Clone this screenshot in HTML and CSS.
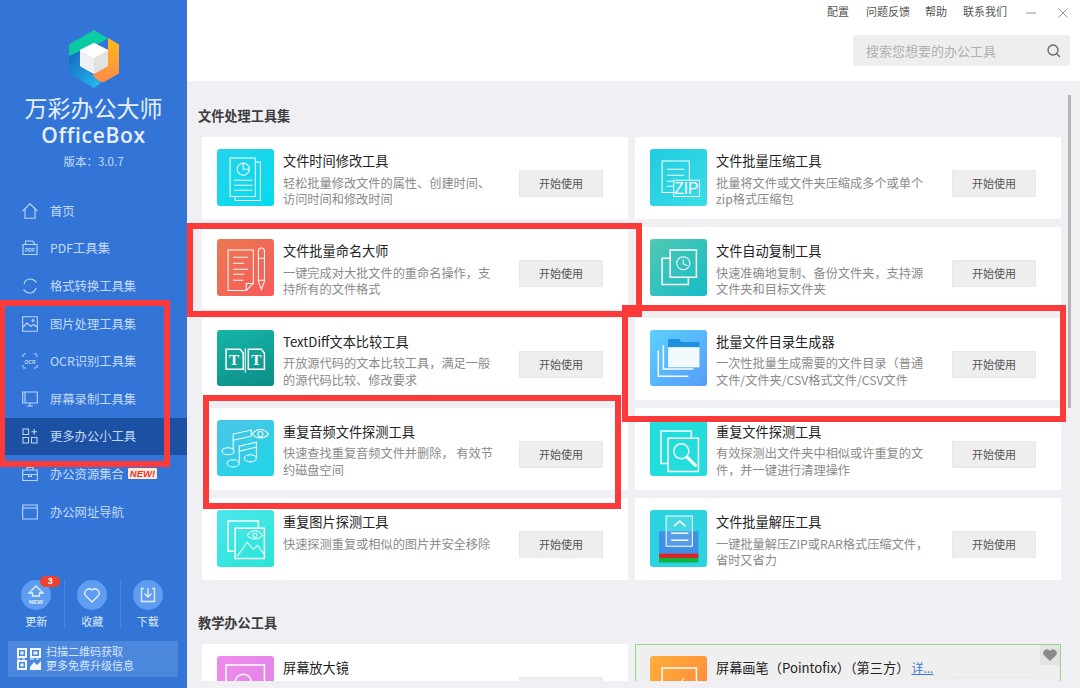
FILE: index.html
```html
<!DOCTYPE html>
<html lang="zh-CN">
<head>
<meta charset="utf-8">
<title>万彩办公大师 OfficeBox</title>
<link rel="stylesheet" href="styles.css">
</head>
<body>
<div class="app">
  <aside class="side">
    <div class="brand">
      <svg class="logo" viewBox="0 0 50 58">
        <defs>
          <linearGradient id="lgA" x1="0" y1="0" x2="1" y2="0"><stop offset="0" stop-color="#08c8a0"/><stop offset="1" stop-color="#0bd0a4"/></linearGradient>
          <linearGradient id="lgB" x1="0" y1="0" x2="0" y2="1"><stop offset="0" stop-color="#ffb914"/><stop offset="1" stop-color="#ff8a4a"/></linearGradient>
          <linearGradient id="lgC" x1="0" y1="0" x2="1" y2="1"><stop offset="0" stop-color="#1565c0"/><stop offset="1" stop-color="#25c0ee"/></linearGradient>
        </defs>
        <path d="M0 14.500 25 0l14 8.500L13 22.500 0 29z" fill="url(#lgA)"/>
        <path d="M39 8 50 14.500v29L34 52.500l-14-5L39 36z" fill="url(#lgB)"/>
        <path d="M0 26 13 20v16l19 17-7 5L0 43.500z" fill="url(#lgC)"/>
        <path d="M11 20 25 13l14 7v16l-14 8-14-8z" fill="#f4f4f4"/>
        <path d="M25 28v16l14-8V20z" fill="#e2e2e2"/>
        <path d="M11 20v16l14 8V28z" fill="#f0f0f0"/>
        <path d="M11 20 25 13l14 7-14 8z" fill="#fff"/>
      </svg>
      <div class="brand-cn">万彩办公大师</div>
      <div class="brand-en">OfficeBox</div>
      <div class="brand-ver">版本：3.0.7</div>
    </div>

    <nav class="menu">
      <a class="menu-item"><svg class="mi" viewBox="0 0 16 16"><path d="M.7 8 8 .8 15.300 8M3 6.500v8.700h10V6.500"/></svg><span>首页</span></a>
      <a class="menu-item"><svg class="mi" viewBox="0 0 16 16"><path d="M3.500 4V1h7l2 2v1M1 4.500h14v10H1z"/><text x="8" y="12" class="mi-t">PDF</text></svg><span>PDF工具集</span></a>
      <a class="menu-item"><svg class="mi" viewBox="0 0 16 16"><path d="M2 6a6.500 6.500 0 0 1 11-3l1.500 1.500M14 10a6.500 6.500 0 0 1-11 3L1.500 11.500"/></svg><span>格式转换工具集</span></a>
      <a class="menu-item"><svg class="mi" viewBox="0 0 16 16"><path d="M.7.700h14.600v14.600H.7zM1 11l4-4 4 3.500 2.500-2L15 11"/><circle cx="11" cy="4.500" r="1"/></svg><span>图片处理工具集</span></a>
      <a class="menu-item"><svg class="mi" viewBox="0 0 16 16"><path d="M1 4V1h3M12 1h3v3M15 12v3h-3M4 15H1v-3" stroke-dasharray="3 1"/><text x="8" y="10.500" class="mi-t">OCR</text></svg><span>OCR识别工具集</span></a>
      <a class="menu-item"><svg class="mi" viewBox="0 0 16 16"><path d="M.7 1h14.600v11H.7zM3 1v11M5 15h6M8 12v3"/></svg><span>屏幕录制工具集</span></a>
      <a class="menu-item active"><svg class="mi" viewBox="0 0 16 16"><path d="M1 1h5.500v5.500H1zM1 9.500h5.500V15H1zM9.500 9.500H15V15H9.500zM12.200 1v5.500M9.500 3.700H15"/></svg><span>更多办公小工具</span></a>
      <a class="menu-item"><svg class="mi" viewBox="0 0 16 16"><path d="M.7 4h14.600v10.500H.7zM5 4V1.500h6V4M.7 8.500h14.600M6.500 8.500v2h3v-2"/></svg><span>办公资源集合</span><em class="new">NEW!</em></a>
      <a class="menu-item"><svg class="mi" viewBox="0 0 16 16"><path d="M.7 1h14.600v14H.7zM.7 4h14.600"/></svg><span>办公网址导航</span></a>
    </nav>

    <div class="quick">
      <a class="q-item">
        <i class="q-circle"><svg class="q-ic" viewBox="0 0 30 30"><path d="M15 6l7 7h-3.500v3h-7v-3H8z"/><text x="15" y="23.500" class="q-new">NEW</text></svg><b class="badge">3</b></i>
        <span>更新</span>
      </a>
      <a class="q-item">
        <i class="q-circle"><svg class="q-ic" viewBox="0 0 30 30"><path d="M15 22 8.500 15.500a4.300 4.300 0 0 1 6.500-5.500 4.300 4.300 0 0 1 6.500 5.500z"/></svg></i>
        <span>收藏</span>
      </a>
      <a class="q-item">
        <i class="q-circle"><svg class="q-ic" viewBox="0 0 30 30"><path d="M11 8.500H8.500v13h13v-13H19M15 8v9M11.500 13.500 15 17l3.500-3.500"/></svg></i>
        <span>下载</span>
      </a>
    </div>

    <div class="promo">
      <svg class="qr" viewBox="0 0 24 22">
        <path d="M0 0h10v10H0zM2 2v6h6V2zM3.500 3.500h3v3h-3zM13 0h11v10H13zM15 2v6h7V2zM16.500 3.500h4v3h-4zM0 12h10v10H0zM2 14v6h6v-6zM3.500 15.500h3v3h-3zM13 19l4-5 3 3 4-4v9H13zM0 10.600h3v1H0zM5 10.600h3v1H5zM13 10.600h4v1h-4zM19 10.600h3v1h-3z" fill-rule="evenodd"/>
      </svg>
      <div class="promo-t">扫描二维码获取<br>更多免费升级信息</div>
    </div>
  </aside>

  <main class="main">
    <header class="top">
      <div class="links">
        <a>配置</a><a>问题反馈</a><a>帮助</a><a>联系我们</a>
        <svg class="win win-min" viewBox="0 0 10 10"><path d="M0 5h10"/></svg>
        <svg class="win win-close" viewBox="0 0 10 10"><path d="M.5.500l9 9M9.500.500l-9 9"/></svg>
      </div>
      <div class="search">
        <span>搜索您想要的办公工具</span>
        <svg class="search-ic" viewBox="0 0 14 14"><circle cx="6" cy="6" r="5"/><path d="M9.800 9.800 13 13"/></svg>
      </div>
    </header>

    <div class="body">
      <div class="scroll">
        <h2 class="sec sec-first">文件处理工具集</h2>
        <div class="grid">

          <article class="card">
            <div class="ic ic-time"><svg viewBox="0 0 56 56"><path class="fl" d="M13 9h25v38H13z"/><path class="fl" d="M38 13h5v38H18v-4"/><circle class="fl" cx="26" cy="20" r="6"/><path class="fl" d="M26 14v6h6M17 31h18M17 36h18M17 41h18"/></svg></div>
            <div class="tx"><h3>文件时间修改工具</h3><p>轻松批量修改文件的属性、创建时间、访问时间和修改时间</p></div>
            <button class="btn">开始使用</button>
          </article>

          <article class="card">
            <div class="ic ic-zip"><svg viewBox="0 0 56 56"><path class="fl" d="M24 43H12V12h27v19"/><path class="fl" d="M17 20h17M17 26h17M17 32h6M17 37h6"/><path class="fl" d="M23.500 31H49v16H23.500z"/><text x="36" y="45" class="zip">ZIP</text></svg></div>
            <div class="tx"><h3>文件批量压缩工具</h3><p>批量将文件或文件夹压缩成多个或单个zip格式压缩包</p></div>
            <button class="btn">开始使用</button>
          </article>

          <article class="card">
            <div class="ic ic-name"><svg viewBox="0 0 56 56"><path class="fl" d="M11 11h25v33l-7 7H11z"/><path class="fl" d="M36 44h-7v7M16 18h15M16 24h11M16 30h15M16 35h11M16 41h10"/><path class="fl" d="M41 12a3 3 0 0 1 6 0v30l-3 8-3-8zM41 19h6M41 41h6"/></svg></div>
            <div class="tx"><h3>文件批量命名大师</h3><p>一键完成对大批文件的重命名操作，支持所有的文件格式</p></div>
            <button class="btn">开始使用</button>
          </article>

          <article class="card">
            <div class="ic ic-copy"><svg viewBox="0 0 56 56"><path class="fl2" d="M20 19h-8v26h26v-7"/><path class="fl2" d="M20 11h26v27H20z"/><circle class="fl" cx="33" cy="24" r="6.500"/><path class="fl" d="M33 20v4.500l4 2"/></svg></div>
            <div class="tx"><h3>文件自动复制工具</h3><p>快速准确地复制、备份文件夹，支持源文件夹和目标文件夹</p></div>
            <button class="btn">开始使用</button>
          </article>

          <article class="card">
            <div class="ic ic-diff"><svg viewBox="0 0 56 56"><path class="fl2" d="M9 19h14l3 4v16H9zM31 19h13l3 4v16H31z"/><path class="fl" d="M28 18v24"/><text x="17" y="35" class="tee">T</text><text x="39" y="35" class="tee">T</text></svg></div>
            <div class="tx"><h3>TextDiff文本比较工具</h3><p>开放源代码的文本比较工具，满足一般的源代码比较、修改要求</p></div>
            <button class="btn">开始使用</button>
          </article>

          <article class="card">
            <div class="ic ic-dir"><svg viewBox="0 0 56 56"><path class="fw" d="M7.500 20H9v25h29v1.500H7.500zM12.500 15H14v23h29v1.500H12.500z"/><path d="M18 12V9h11l2 3h18v5H18z" fill="#1e90e0"/><path d="M18 17h31v20H18z" class="ffill"/></svg></div>
            <div class="tx"><h3>批量文件目录生成器</h3><p>一次性批量生成需要的文件目录（普通文件/文件夹/CSV格式文件/CSV文件</p></div>
            <button class="btn">开始使用</button>
          </article>

          <article class="card">
            <div class="ic ic-audio"><svg viewBox="0 0 56 56"><path class="fl" d="M16 30V14l18-4v6l-18 4M22 42V26l17-4v16M22 31l17-4"/><ellipse class="fl" cx="11" cy="31" rx="6" ry="3.500"/><ellipse class="fl" cx="16" cy="43" rx="6" ry="3.500"/><ellipse class="fl" cx="33" cy="38" rx="6" ry="3.500"/><path class="fl" d="M35 14c4-6 12-6 16 0-4 5-12 5-16 0z"/><circle class="fl" cx="43" cy="14" r="2.500"/></svg></div>
            <div class="tx"><h3>重复音频文件探测工具</h3><p>快速查找重复音频文件并删除， 有效节约磁盘空间</p></div>
            <button class="btn">开始使用</button>
          </article>

          <article class="card">
            <div class="ic ic-dup"><svg viewBox="0 0 56 56"><path class="fl2" d="M18 43h-7V11h30v7"/><path class="fl2" d="M18 18h30v33H18z"/><circle class="fl2" cx="31" cy="31" r="7.500"/><path class="fl3" d="M37 37l8 8"/></svg></div>
            <div class="tx"><h3>重复文件探测工具</h3><p>有效探测出文件夹中相似或许重复的文件，并一键进行清理操作</p></div>
            <button class="btn">开始使用</button>
          </article>

          <article class="card">
            <div class="ic ic-img"><svg viewBox="0 0 56 56"><path class="fl2" d="M17 41h-6V11h30v6"/><path class="fl2" d="M18 18h29v30H18z"/><path class="fl" d="M20 46l10-14 6 7 4-4 7 9"/><path class="fl" d="M30 25c4-6 11-6 15 0-4 5-11 5-15 0z"/><circle class="fl" cx="37.500" cy="25" r="2"/></svg></div>
            <div class="tx"><h3>重复图片探测工具</h3><p>快速探测重复或相似的图片并安全移除</p></div>
            <button class="btn">开始使用</button>
          </article>

          <article class="card">
            <div class="ic ic-unzip"><svg viewBox="0 0 56 56"><path d="M9 21h39v22H9z" fill="#3f8fe6"/><path d="M9 43h39v4.500H9z" fill="#d6262c"/><path d="M9 47.500h39V52H9z" fill="#10b43c"/><path d="M16 6h26v30H16z" fill="#fff" fill-opacity=".12" stroke="#fff"/><path class="fl2" d="M24 16l5.500-5 5.500 5M21 23h17M21 30h17"/></svg></div>
            <div class="tx"><h3>文件批量解压工具</h3><p>一键批量解压ZIP或RAR格式压缩文件，省时又省力</p></div>
            <button class="btn">开始使用</button>
          </article>
        </div>

        <h2 class="sec sec-next">教学办公工具</h2>
        <div class="grid">
          <article class="card">
            <div class="ic ic-mag"><svg viewBox="0 0 56 56"><path class="fl2" d="M9 9h38v38H9z"/><circle class="fl2" cx="26" cy="26" r="8"/></svg></div>
            <div class="tx"><h3>屏幕放大镜</h3><p>&nbsp;</p></div>
            <button class="btn">开始使用</button>
          </article>
          <article class="card card-third">
            <div class="ic ic-pen"><svg viewBox="0 0 56 56"><path class="fl2" d="M12 12h34v28H12z"/><path class="fl" d="M20 28c6 4 10-2 14-6"/></svg></div>
            <div class="tx"><h3>屏幕画笔（Pointofix）（第三方）<a class="more">详...</a></h3><p>&nbsp;</p></div>
            <button class="btn btn-clear">开始使用</button>
            <span class="fav"><svg viewBox="0 0 14 12"><path d="M7 12 1 6.200A3.400 3.400 0 0 1 7 2a3.400 3.400 0 0 1 6 4.200z"/></svg></span>
          </article>
        </div>
      </div>
      <i class="scrollbar"></i>
    </div>
  </main>

  <i class="mark mark-a"></i>
  <i class="mark mark-b"></i>
  <i class="mark mark-c"></i>
  <i class="mark mark-d"></i>
</div>
</body>
</html>
```

FILE: styles.css
```css
* { box-sizing: border-box; margin: 0; padding: 0; }
html, body { width: 1080px; height: 688px; overflow: hidden; }
body { font-family: "Noto Sans CJK SC", "Noto Sans", sans-serif; background: #efeff4; }
i, em { font-style: normal; }

.app { position: relative; display: flex; width: 1080px; height: 688px; overflow: hidden; }

/* sidebar */
.side { width: 187px; flex: none; background: #3375d6; display: flex; flex-direction: column; color: #cfe1fa; }
.brand { display: flex; flex-direction: column; align-items: center; padding-top: 30px; }
.logo { width: 50px; height: 58px; display: block; }
.brand-cn { font-size: 23px; line-height: 28px; color: #e6f0fd; margin-top: 5px; font-weight: 400; }
.brand-en { font-family: "Open Sans", sans-serif; font-size: 21px; line-height: 24px; margin-top: 2px; letter-spacing: .7px; font-weight: 600; color: #e6f0fd; }
.brand-ver { font-size: 11.500px; line-height: 16px; margin-top: 6px; color: #c8dcf8; }

.menu { margin-top: 23px; display: flex; flex-direction: column; }
.menu-item { height: 37.6px; display: flex; align-items: center; padding-left: 22px; font-size: 12.300px; color: #c4daf8; }
.menu-item.active { background: #1b50a3; }
.mi { width: 16px; height: 16px; margin-right: 12px; flex: none; fill: none; stroke: #bcd5f7; stroke-width: 1.100; overflow: visible; }
.mi-t { font: 700 5px "Liberation Sans", sans-serif; text-anchor: middle; fill: #bcd5f7; stroke: none; }
.new { margin-left: 4px; font: italic 700 9.500px/11px "Liberation Sans", sans-serif; background: #fde9da; color: #e8352b; padding: 0 2px; border-radius: 1px; }

.quick { margin-top: 49.600px; display: flex; padding-left: 8.500px; }
.q-item { width: 55.500px; height: 48px; display: flex; flex-direction: column; align-items: center; font-size: 11px; line-height: 16px; color: #dbe8fb; border-left: 1px solid #4a86dc; }
.q-item:first-child { border-left: 0; }
.q-circle { position: relative; display: block; width: 30px; height: 30px; border-radius: 50%; background: #5e9df0; margin-bottom: 3px; }
.q-ic { width: 30px; height: 30px; display: block; fill: none; stroke: #e6f0fd; stroke-width: 1.300; }
.q-new { font: 700 6px "Liberation Sans", sans-serif; fill: #e6f0fd; stroke: none; text-anchor: middle; }
.badge { position: absolute; left: 19px; top: -4px; width: 20px; height: 11px; border-radius: 6px; background: #ef4130; color: #fff; font: 700 9px/11px "Liberation Sans", sans-serif; text-align: center; }

.promo { margin: 13px 9px 0 8px; height: 36px; background: #4b87dd; display: flex; align-items: center; padding-left: 9px; gap: 5px; }
.qr { width: 24px; height: 22px; fill: #f2f7fe; flex: none; }
.promo-t { font-size: 11px; line-height: 13.500px; color: #d8e6fb; }

/* main */
.main { flex: 1; display: flex; flex-direction: column; min-width: 0; }
.top { height: 81px; flex: none; background: #fff; position: relative; }
.links { display: flex; height: 22px; align-items: center; padding-left: 640px; font-size: 11px; color: #555; }
.links a { margin-right: 16px; line-height: 22px; white-space: nowrap; }
.links a:nth-child(1) { margin-right: 17px; }
.links a:nth-child(2) { margin-right: 15px; }
.win { width: 10px; height: 10px; fill: none; stroke: #777; stroke-width: .8; flex: none; margin-top: 3px; }
.win-min { margin-left: 3px; }
.win-close { margin-left: 22px; }
.search { position: absolute; left: 666px; top: 35px; width: 217px; height: 31px; background: #eeeeee; border-radius: 3px; display: flex; align-items: center; justify-content: space-between; padding: 0 9px 0 13px; font-size: 13px; color: #b0b0b0; }
.search-ic { width: 14px; height: 14px; fill: none; stroke: #666; stroke-width: 1.300; }

.body { height: 600px; flex: none; position: relative; display: flex; }
.scroll { width: 100%; height: 600px; overflow: hidden; padding-left: 11px; background: #efeff4; }
.scrollbar { position: absolute; right: 9px; top: 14px; width: 3px; height: 313px; background: #b4b4b7; }

.sec { font-size: 13.200px; line-height: 18px; font-weight: 700; color: #3c3c3c; }
.sec-first { margin-top: 26px; }
.sec-next { margin-top: 34px; }

.grid { display: grid; grid-template-columns: 426px 426px; column-gap: 7px; row-gap: 8.250px; margin: 12px 0 0 4px; }
.card { position: relative; height: 82px; background: #fff; display: flex; padding: 12px 25px 0 15px; }
.ic { width: 56.500px; height: 56.500px; border-radius: 3px; flex: none; }
.ic svg { width: 100%; height: 100%; display: block; }
.fl, .fl2, .fl3 { fill: none; stroke: #fff; }
.fl { stroke-width: 1; }
.fl2 { stroke-width: 1.500; }
.fl3 { stroke-width: 3; stroke-linecap: round; }
.fw { fill: #fff; }
.ffill { fill: #fff; fill-opacity: .92; }
.zip { font: 400 15.500px "Liberation Sans", sans-serif; fill: #fff; text-anchor: middle; }
.tee { font: 700 15px "Liberation Serif", serif; fill: #fff; text-anchor: middle; }
.ic-time { background: linear-gradient(135deg, #26d3ea, #06dbee); }
.ic-zip { background: linear-gradient(135deg, #22cbdf, #38dde6); }
.ic-name { background: linear-gradient(135deg, #ea7a52, #f9595b); }
.ic-copy { background: linear-gradient(135deg, #52c8b2, #15bcc8); }
.ic-diff { background: linear-gradient(160deg, #17b5a8, #0b8e88); }
.ic-dir { background: linear-gradient(135deg, #5cd0ff, #569cf8); }
.ic-audio { background: linear-gradient(150deg, #4cc5e6, #1dd5e8); }
.ic-dup { background: #22dddc; }
.ic-img { background: linear-gradient(150deg, #4de6ec, #28e5d6); }
.ic-unzip { background: #2bd3e1; }
.ic-mag { background: linear-gradient(135deg, #ee8cec, #e080e8); }
.ic-pen { background: linear-gradient(135deg, #ffb03a, #ff7f3a); }

.tx { width: 214px; margin-left: 9.500px; margin-top: 1px; flex: none; }
.tx h3 { font-size: 13.200px; line-height: 22px; font-weight: 400; color: #222; white-space: nowrap; }
.tx p { font-size: 12.200px; line-height: 16.500px; color: #8a8a8a; margin-top: 2.500px; }
.more { color: #3a78d8; text-decoration: underline; margin-left: 2px; font-size: 12px; }

.btn { position: absolute; right: 25px; top: 33px; width: 84px; height: 27px; background: #eeeeee; border: 1px solid #e8e8e8; font: 11px/25px "Noto Sans CJK SC", sans-serif; color: #555; }
.card-third { background: #efefef; border: 1px solid #8edb76; padding: 11px 24px 0 14px; }
.card-third .btn { right: 24px; top: 32px; }
.btn-clear { background: transparent; }
.fav { position: absolute; right: 0; top: 0; width: 20px; height: 20px; background: #e3e3e3; display: flex; align-items: center; justify-content: center; }
.fav svg { width: 14px; height: 12px; fill: #8a8a8a; }

/* red annotation rectangles drawn over the screenshot */
.mark { position: absolute; border: 6.500px solid #fd3a3a; pointer-events: none; }
.mark-a { left: -1px; top: 300px; width: 171px; height: 167px; }
.mark-b { left: 187px; top: 223px; width: 455px; height: 94px; }
.mark-c { left: 622px; top: 305px; width: 444px; height: 117px; }
.mark-d { left: 203px; top: 395px; width: 418px; height: 113.500px; }
```
